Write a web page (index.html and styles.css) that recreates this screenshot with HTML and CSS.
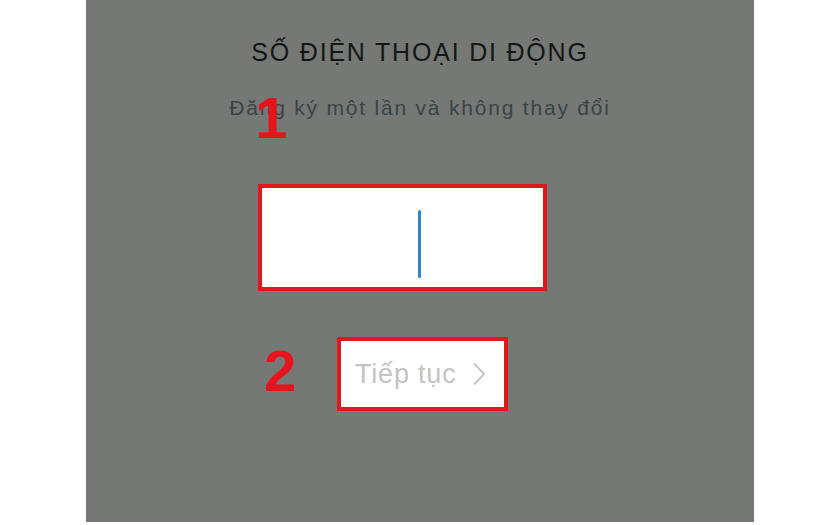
FILE: index.html
```html
<!DOCTYPE html>
<html lang="vi">
<head>
<meta charset="utf-8">
<title>Số điện thoại di động</title>
<link rel="stylesheet" href="styles.css">
</head>
<body>
<div class="panel">
  <h1 class="title">SỐ ĐIỆN THOẠI DI ĐỘNG</h1>
  <p class="subtitle">Đăng ký một lần và không thay đổi</p>
  <div class="field-row">
    <div class="field"><span class="cursor"></span></div>
  </div>
  <div class="btn-row">
    <div class="btn">
      <span class="btn-label">Tiếp tục</span>
      <svg class="chev" width="14" height="24" viewBox="0 0 14 24"><path d="M2 1.5 L12 12 L2 22.5" fill="none" stroke="#bcbcbc" stroke-width="1.8"/></svg>
    </div>
  </div>
  <span class="mark mark-1">1</span>
  <span class="mark mark-2">2</span>
</div>
</body>
</html>
```
FILE: styles.css
```css
html, body {
  margin: 0;
  padding: 0;
  background: #ffffff;
}
body {
  width: 840px;
  height: 525px;
  overflow: hidden;
  font-family: "Liberation Sans", Arial, sans-serif;
}
.panel {
  position: relative;
  margin-left: 86px;
  width: 668px;
  height: 522px;
  background: #767875;
  display: flex;
  flex-direction: column;
  align-items: center;
}
.title {
  margin: 37px 0 0 0;
  font-size: 25px;
  line-height: 30px;
  letter-spacing: 1.8px;
  font-weight: normal;
  color: #141616;
}
.subtitle {
  margin: 28px 0 0 0;
  font-size: 21px;
  line-height: 26px;
  letter-spacing: 1.8px;
  color: #3a4446;
}
.field-row {
  align-self: stretch;
  padding-left: 172px;
  margin-top: 63px;
}
.field {
  box-sizing: border-box;
  width: 289px;
  height: 107px;
  border: 4px solid #dc1a1c;
  background: #ffffff;
  padding: 22px 0 0 156px;
}
.cursor {
  display: block;
  width: 3px;
  height: 68px;
  border-radius: 2px;
  background: #2f86c6;
}
.btn-row {
  align-self: stretch;
  padding-left: 251px;
  margin-top: 46px;
}
.btn {
  box-sizing: border-box;
  width: 171px;
  height: 74px;
  border: 4px solid #dc1a1c;
  background: #ffffff;
  display: flex;
  align-items: center;
  padding-left: 14px;
}
.btn-label {
  font-size: 27px;
  letter-spacing: 0.8px;
  color: #c3c3c3;
}
.chev {
  margin-left: 16px;
}
.mark {
  position: absolute;
  font-weight: bold;
  color: #e8121c;
  font-size: 58px;
  line-height: 58px;
}
.mark-1 {
  left: 169px;
  top: 89px;
}
.mark-2 {
  left: 178px;
  top: 342px;
}
```
